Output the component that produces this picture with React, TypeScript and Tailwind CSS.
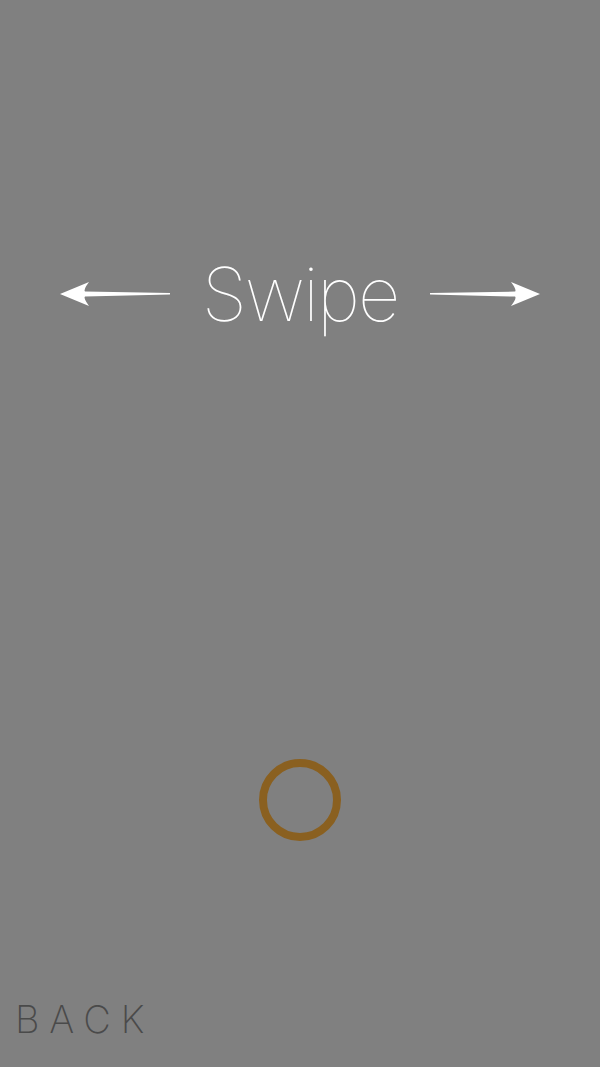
import React from 'react';

const Arrow: React.FC<{ flip?: boolean }> = ({ flip }) => (
  <svg
    width="110"
    height="28"
    viewBox="0 0 110 28"
    className={flip ? '-scale-x-100' : ''}
  >
    <path
      d="M0 14 L29 2 Q23 10 25 11.6 L110 13 L110 14.6 L25 16.6 Q23 18 29 26 Z"
      fill="#ffffff"
    />
  </svg>
);

export default function App() {
  return (
    <div className="w-[600px] h-[1067px] bg-[#808080] flex flex-col font-['Inter','Liberation_Sans',sans-serif]">
      {/* Swipe hint */}
      <div className="pt-[249px] px-[60px] grid grid-cols-[110px_1fr_110px] items-center">
        <Arrow />
        <span className="text-center text-[74px] leading-[90px] font-thin text-white tracking-[-2px]">
          Swipe
        </span>
        <Arrow flip />
      </div>

      {/* Ring */}
      <div className="mt-[420px] flex justify-center">
        <div className="w-[82px] h-[82px] rounded-full border-[8px] border-[#8a6020]" />
      </div>

      {/* Back */}
      <div className="mt-auto pb-[26px] pl-[15px]">
        <span className="text-[38px] leading-[44px] font-extralight text-[#4a4a4a] tracking-[0.26em]">
          BACK
        </span>
      </div>
    </div>
  );
}
